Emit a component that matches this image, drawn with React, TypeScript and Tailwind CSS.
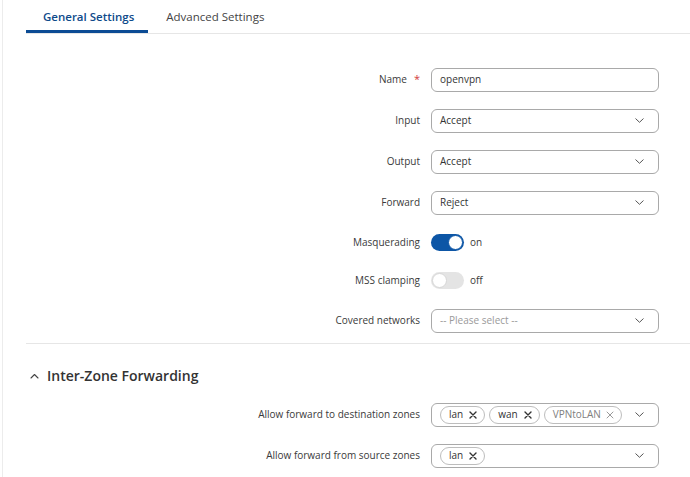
import React from "react";

const font = { fontFamily: '"Open Sans", "Noto Sans", sans-serif' };

function Chevron() {
  return (
    <svg width="9" height="5" viewBox="0 0 9 5" fill="none" className="shrink-0">
      <path d="M0.8 0.8l3.7 3.5 3.7-3.5" stroke="#555" strokeWidth="1" strokeLinecap="round" strokeLinejoin="round" />
    </svg>
  );
}

function X({ light }: { light?: boolean }) {
  return (
    <svg width="8" height="8" viewBox="0 0 8 8" className="shrink-0">
      <path d="M1 1l6 6M7 1l-6 6" stroke={light ? "#999" : "#333"} strokeWidth={light ? "1" : "1.4"} strokeLinecap="round" />
    </svg>
  );
}

function Row({ label, required, children, h = "h-[41px]" }: { label: string; required?: boolean; children: React.ReactNode; h?: string }) {
  return (
    <div className={`flex items-center ${h}`}>
      <div className="w-[420px] flex justify-end items-center text-[10px] text-[#3a3a3a]">
        <span>{label}</span>
        {required && <span className="text-[#d23a3a] ml-[7px] text-[11px]">*</span>}
      </div>
      <div className="ml-[11px] w-[228px] flex items-center">{children}</div>
    </div>
  );
}

function Select({ value, placeholder }: { value?: string; placeholder?: string }) {
  return (
    <div className="w-full h-[24px] border border-[#a9a9a9] rounded-[6px] flex items-center justify-between pl-[8px] pr-[14px] text-[10px]">
      <span className={placeholder ? "text-[#9a9a9a]" : "text-[#333]"}>{value ?? placeholder}</span>
      <Chevron />
    </div>
  );
}

function Toggle({ on }: { on: boolean }) {
  return (
    <div className="flex items-center gap-[6px]">
      {on ? (
        <div className="w-[33px] h-[17px] rounded-full bg-[#0d56a6] flex items-center justify-end pr-[1px]">
          <div className="w-[15px] h-[15px] rounded-full bg-white border border-[#0d56a6]" />
        </div>
      ) : (
        <div className="w-[33px] h-[17px] rounded-full bg-[#e4e4e4] flex items-center justify-start pl-[1px]">
          <div className="w-[15px] h-[15px] rounded-full bg-white border border-[#d6d6d6]" />
        </div>
      )}
      <span className="text-[10px] text-[#3a3a3a]">{on ? "on" : "off"}</span>
    </div>
  );
}

function Tag({ label, light }: { label: string; light?: boolean }) {
  return (
    <div className={`h-[18px] border border-[#bdbdbd] rounded-full flex items-center pl-[8px] pr-[7px] text-[10px] ${light ? "gap-[5px]" : "gap-[6px]"}`}>
      <span className={light ? "text-[#808080]" : "text-[#333]"}>{label}</span>
      <X light={light} />
    </div>
  );
}

function Multi({ tags }: { tags: { label: string; light?: boolean }[] }) {
  return (
    <div className="w-full h-[24px] border border-[#a9a9a9] rounded-[6px] flex items-center justify-between pl-[8px] pr-[14px]">
      <div className="flex items-center gap-[4px]">
        {tags.map((t) => (
          <Tag key={t.label} label={t.label} light={t.light} />
        ))}
      </div>
      <Chevron />
    </div>
  );
}

export default function App() {
  return (
    <div className="w-[690px] h-[477px] bg-white overflow-hidden flex" style={font}>
      <div className="w-[2px] shrink-0" />
      <div className="w-px bg-[#ececec] shrink-0" />
      <div className="flex-1 pl-[23px]">
        <div className="flex border-b border-[#e6e6e6] h-[34px]">
          <div className="pl-[17px] pr-[14px] flex items-center border-b-[3px] border-[#0b4b94] text-[11.5px] font-semibold text-[#0e4a8a] pt-[3px]">
            General Settings
          </div>
          <div className="px-[18px] flex items-center text-[11.5px] text-[#444]">Advanced Settings</div>
        </div>
        <div className="ml-[-26px] pt-[25px]">
          <Row label="Name" required>
            <div className="w-full h-[24px] border border-[#a9a9a9] rounded-[6px] flex items-center pl-[8px] text-[10px] text-[#333]">openvpn</div>
          </Row>
          <Row label="Input"><Select value="Accept" /></Row>
          <Row label="Output"><Select value="Accept" /></Row>
          <Row label="Forward"><Select value="Reject" /></Row>
          <Row label="Masquerading" h="h-[38px]"><Toggle on /></Row>
          <Row label="MSS clamping" h="h-[39px]"><Toggle on={false} /></Row>
          <Row label="Covered networks"><Select placeholder="-- Please select --" /></Row>
        </div>
        <div className="mt-[2px] border-t border-[#e6e6e6]" />
        <div className="h-[50px] flex items-center gap-[8px] pl-[4px] pt-[13px]">
          <svg width="9" height="6" viewBox="0 0 9 6" fill="none">
            <path d="M1 5l3.5-3.5L8 5" stroke="#444" strokeWidth="1.1" strokeLinecap="round" strokeLinejoin="round" />
          </svg>
          <span className="text-[14px] font-semibold text-[#333]">Inter-Zone Forwarding</span>
        </div>
        <div className="ml-[-26px]">
          <Row label="Allow forward to destination zones">
            <Multi tags={[{ label: "lan" }, { label: "wan" }, { label: "VPNtoLAN", light: true }]} />
          </Row>
          <Row label="Allow forward from source zones">
            <Multi tags={[{ label: "lan" }]} />
          </Row>
        </div>
      </div>
    </div>
  );
}
